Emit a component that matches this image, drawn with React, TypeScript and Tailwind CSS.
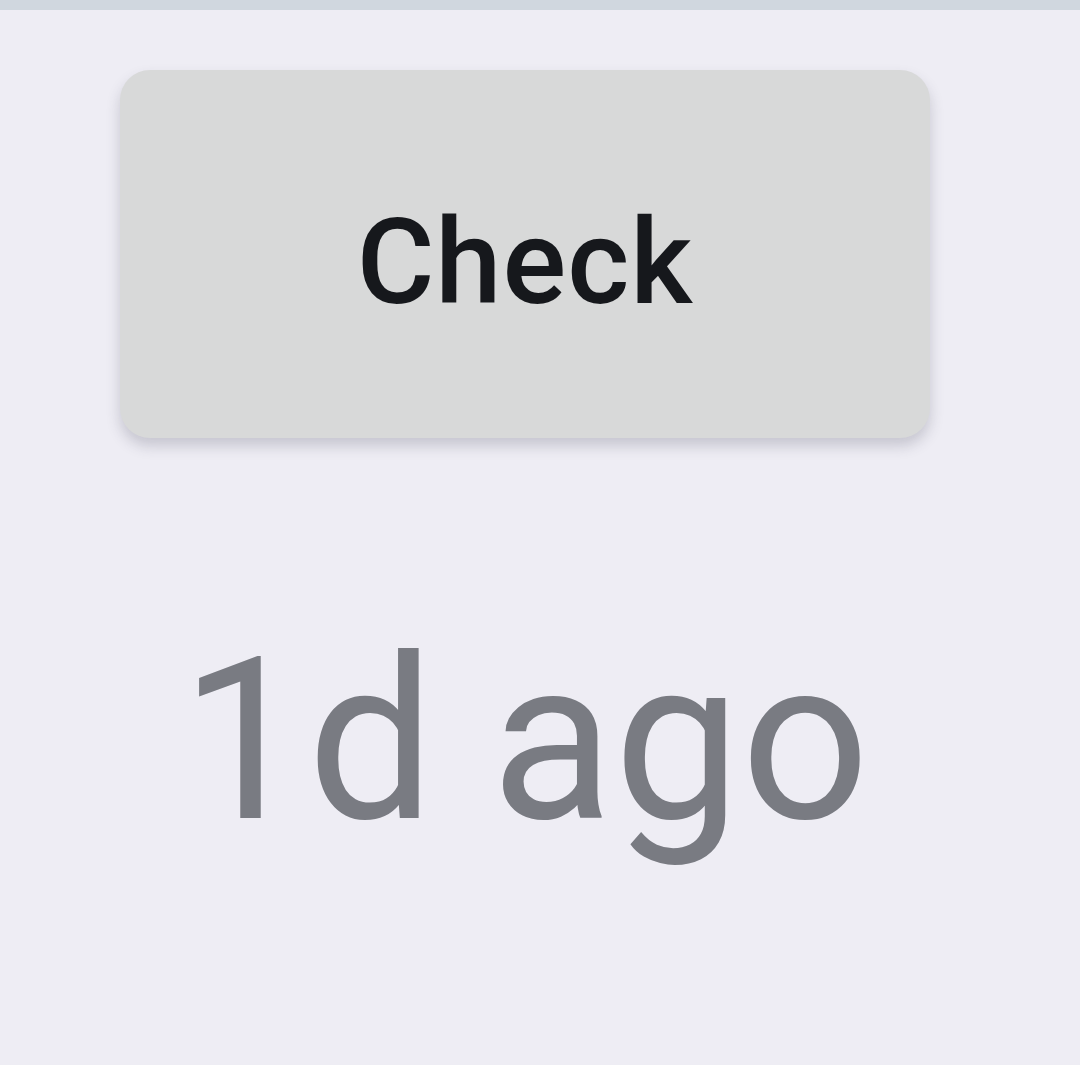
import React from 'react';

const App: React.FC = () => {
  return (
    <div className="min-h-[1065px] w-[1080px] bg-[#eeedf4]" style={{ fontFamily: 'Roboto, "Liberation Sans", sans-serif' }}>
      {/* Top bar */}
      <div className="h-[10px] bg-[#d0d7df]" />

      <div className="w-[1050px] flex flex-col items-center pt-[60px]">
        <button className="w-[810px] h-[368px] rounded-[30px] bg-[#d8d9d9] shadow-[0_8px_14px_rgba(60,60,80,0.22)] flex items-center justify-center">
          <span className="pt-[16px] text-[119px] font-medium tracking-[1px] text-[#16181c] leading-none">Check</span>
        </button>

        <div className="mt-[190px] text-[226px] leading-none text-[#797b82]">1d ago</div>
      </div>
    </div>
  );
};

export default App;
